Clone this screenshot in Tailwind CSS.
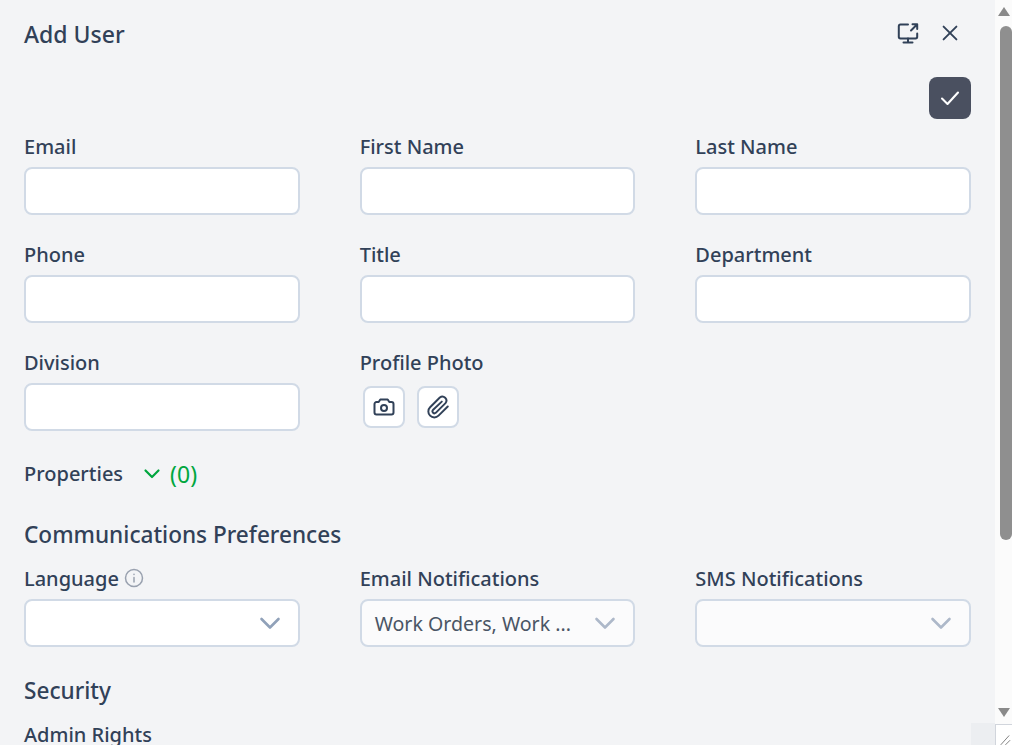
<!DOCTYPE html>
<html>
<head>
<meta charset="utf-8">
<script src="https://cdn.jsdelivr.net/npm/@tailwindcss/browser@4"></script>
</head>
<body class="m-0 bg-white overflow-hidden font-['Noto_Sans',sans-serif]">
<div class="flex w-[1012px] h-[745px] overflow-hidden">
  <main class="w-[995px] h-[745px] bg-gray-100 px-6 overflow-hidden relative text-slate-700">
    <header class="flex items-center justify-between h-[66px]">
      <h1 class="text-[23px] leading-[30px] mt-[2px] font-medium text-slate-700">Add User</h1>
      <div class="flex items-center gap-[20px] mr-[9px] text-slate-700">
        <svg class="w-6 h-6 -mt-[1px]" viewBox="0 0 24 24" fill="none" stroke="currentColor" stroke-width="2" stroke-linecap="round" stroke-linejoin="round"><path d="M12 3.5H4.5A1.8 1.8 0 0 0 2.8 5.3v10.4a1.8 1.8 0 0 0 1.7 1.8h15a1.8 1.8 0 0 0 1.7-1.8V12.5"/><path d="M12 17.5v4M7.5 21.5h9"/><path d="M15 9.5 21 3.5M16.5 3.2h4.7v4.7"/></svg>
        <svg class="w-[22px] h-[22px] -ml-[1px] mr-[1px]" viewBox="0 0 24 24" fill="none" stroke="currentColor" stroke-width="2.1" stroke-linecap="round"><path d="M5 5l14 14M19 5 5 19"/></svg>
      </div>
    </header>
    <div class="flex justify-end h-[42px] mt-[11px]">
      <button class="w-[42px] h-[42px] rounded-lg bg-[#4a5060] flex items-center justify-center text-white">
        <svg class="w-6 h-6" viewBox="0 0 24 24" fill="none" stroke="currentColor" stroke-width="2.1" stroke-linecap="round" stroke-linejoin="round"><path d="M4 12.5 9.5 18 20 6.5"/></svg>
      </button>
    </div>
    <form class="grid grid-cols-3 gap-x-[60px] mt-[14px]">
      <div class="h-[108px]"><label class="block text-[20px] leading-[28px] font-medium">Email</label><div class="h-[48px] mt-[6px] rounded-lg border-2 border-[#d1dae6] bg-white"></div></div>
      <div class="h-[108px]"><label class="block text-[20px] leading-[28px] font-medium">First Name</label><div class="h-[48px] mt-[6px] rounded-lg border-2 border-[#d1dae6] bg-white"></div></div>
      <div class="h-[108px]"><label class="block text-[20px] leading-[28px] font-medium">Last Name</label><div class="h-[48px] mt-[6px] rounded-lg border-2 border-[#d1dae6] bg-white"></div></div>
      <div class="h-[108px]"><label class="block text-[20px] leading-[28px] font-medium">Phone</label><div class="h-[48px] mt-[6px] rounded-lg border-2 border-[#d1dae6] bg-white"></div></div>
      <div class="h-[108px]"><label class="block text-[20px] leading-[28px] font-medium">Title</label><div class="h-[48px] mt-[6px] rounded-lg border-2 border-[#d1dae6] bg-white"></div></div>
      <div class="h-[108px]"><label class="block text-[20px] leading-[28px] font-medium">Department</label><div class="h-[48px] mt-[6px] rounded-lg border-2 border-[#d1dae6] bg-white"></div></div>
      <div class="h-[108px]"><label class="block text-[20px] leading-[28px] font-medium">Division</label><div class="h-[48px] mt-[6px] rounded-lg border-2 border-[#d1dae6] bg-white"></div></div>
      <div class="h-[108px]"><label class="block text-[20px] leading-[28px] font-medium">Profile Photo</label>
        <div class="flex gap-3 mt-[9px] ml-[3px]">
          <button class="w-[42px] h-[42px] rounded-lg border-2 border-[#d1dae6] bg-white flex items-center justify-center text-slate-700">
            <svg class="w-6 h-6" viewBox="0 0 24 24" fill="none" stroke="currentColor" stroke-width="2" stroke-linecap="round" stroke-linejoin="round"><path d="M2.5 9a2 2 0 0 1 2-2h2.2l1.6-2.5h7.4L17.3 7h2.2a2 2 0 0 1 2 2v8.5a2 2 0 0 1-2 2h-15a2 2 0 0 1-2-2z"/><circle cx="12" cy="13" r="3"/></svg>
          </button>
          <button class="w-[42px] h-[42px] rounded-lg border-2 border-[#d1dae6] bg-white flex items-center justify-center text-slate-700">
            <svg class="w-[26px] h-[26px]" viewBox="0 0 24 24" fill="none" stroke="currentColor" stroke-width="1.8" stroke-linecap="round" stroke-linejoin="round"><path d="M21 11.5 12.5 20a5.5 5.5 0 0 1-7.8-7.8l9-9a3.7 3.7 0 0 1 5.2 5.2l-9 9a1.85 1.85 0 0 1-2.6-2.6L15.5 7"/></svg>
          </button>
        </div>
      </div>
    </form>
    <div class="flex items-center h-[30px] mt-[2px]">
      <span class="text-[20px] leading-[28px] font-medium">Properties</span>
      <svg class="w-5 h-5 ml-[19px] -mt-[1px] text-green-600" viewBox="0 0 20 20" fill="none" stroke="currentColor" stroke-width="2.2" stroke-linecap="round" stroke-linejoin="round"><path d="M3.5 6.5 10 13l6.5-6.5"/></svg>
      <span class="text-[23px] leading-[30px] text-green-600 ml-[8px]">(0)</span>
    </div>
    <h2 class="text-[22.6px] leading-[30px] font-medium mt-[31px]">Communications Preferences</h2>
    <div class="grid grid-cols-3 gap-x-[60px] mt-[15px]">
      <div><label class="flex items-center gap-[5px] text-[20px] leading-[28px] font-medium">Language
        <svg class="w-5 h-5 -mt-[2px] text-gray-400" viewBox="0 0 20 20" fill="none" stroke="currentColor" stroke-width="1.5" stroke-linecap="round"><circle cx="10" cy="10" r="8.5"/><path d="M10 9.5v4.5M10 6.2v.2"/></svg></label>
        <div class="h-[48px] mt-[6px] rounded-lg border-2 border-[#d1dae6] bg-white flex items-center justify-end pr-[16px] text-slate-400">
          <svg class="w-6 h-6" viewBox="0 0 24 24" fill="none" stroke="currentColor" stroke-width="2.6" stroke-linecap="round" stroke-linejoin="round"><path d="M3.5 8 12 16.5 20.5 8"/></svg>
        </div></div>
      <div><label class="block text-[20px] leading-[28px] font-medium">Email Notifications</label>
        <div class="h-[48px] mt-[6px] rounded-lg border-2 border-[#d1dae6] bg-[#fbfbfc] flex items-center pl-[13px] pr-[16px] text-[#adb8c9]">
          <span class="flex-1 text-[19.6px] mt-[2px] text-gray-600 whitespace-nowrap">Work Orders, Work ...</span>
          <svg class="w-6 h-6" viewBox="0 0 24 24" fill="none" stroke="currentColor" stroke-width="2.6" stroke-linecap="round" stroke-linejoin="round"><path d="M3.5 8 12 16.5 20.5 8"/></svg>
        </div></div>
      <div><label class="block text-[20px] leading-[28px] font-medium">SMS Notifications</label>
        <div class="h-[48px] mt-[6px] rounded-lg border-2 border-[#d1dae6] bg-[#fbfbfc] flex items-center justify-end pr-[16px] text-[#adb8c9]">
          <svg class="w-6 h-6" viewBox="0 0 24 24" fill="none" stroke="currentColor" stroke-width="2.6" stroke-linecap="round" stroke-linejoin="round"><path d="M3.5 8 12 16.5 20.5 8"/></svg>
        </div></div>
    </div>
    <h2 class="text-[22.6px] leading-[30px] font-medium mt-[29px]">Security</h2>
    <label class="block text-[20px] leading-[28px] font-medium mt-[15px]">Admin Rights</label>
    <div class="absolute right-0 bottom-0 w-6 h-[22px] bg-[#eceef1]"></div>
  </main>
  <aside class="w-[17px] h-[745px] bg-[#fbfbfb] flex flex-col items-center relative">
    <div class="h-[22px] flex items-center justify-center"><div class="w-0 h-0 border-x-[6px] border-x-transparent border-b-[9px] border-b-[#8a8a8a]"></div></div>
    <div class="w-[12px] h-[514px] rounded-full bg-[#8f8f8f] mt-[4px] ml-[5px]"></div>
    <div class="flex-1"></div>
    <div class="h-[24px] mb-[21px] flex items-center justify-center"><div class="w-0 h-0 border-x-[6px] border-x-transparent border-t-[9px] border-t-[#8a8a8a]"></div></div>
    <div class="absolute left-0 bottom-0 w-[17px] h-[21px] bg-white border-l border-t border-gray-300 overflow-hidden">
      <svg class="w-full h-full" viewBox="0 0 17 21" fill="none" stroke="#7a7a7a" stroke-width="1"><path d="M5 21 14 11M10 21l5-5"/></svg>
    </div>
  </aside>
</div>
</body>
</html>
